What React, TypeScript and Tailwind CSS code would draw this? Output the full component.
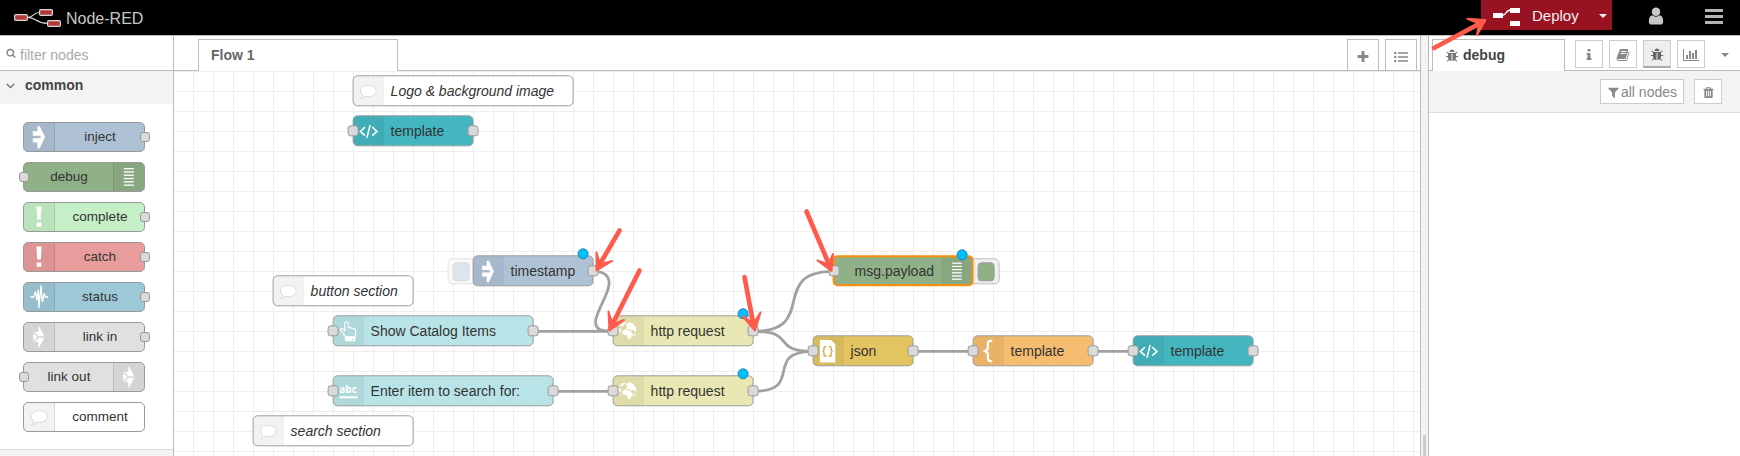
import React from "react";

type IconName =
  | "inject" | "debug" | "bang" | "status" | "link" | "comment"
  | "code" | "hand" | "abc" | "globe" | "json" | "brace";

const FA = {
  bug: "M1696 960q0 26-19 45t-45 19h-224q0 171-67 290l208 209q19 19 19 45t-19 45q-18 19-45 19t-45-19l-198-197q-5 5-15 13t-42 28.5-65 36.5-82 29-97 13v-896h-128v896q-51 0-101.5-13.5t-87-33-66-39-43.5-32.5l-15-14-183 207q-20 21-48 21-24 0-43-16-19-18-20.5-44.5t15.5-46.5l202-227q-58-114-58-274h-224q-26 0-45-19t-19-45 19-45 45-19h224v-294l-173-173q-19-19-19-45t19-45 45-19 45 19l173 173h844l173-173q19-19 45-19t45 19 19 45-19 45l-173 173v294h224q26 0 45 19t19 45zm-480-576h-640q0-133 93.5-226.5t226.5-93.5 226.5 93.5 93.5 226.5z",
  chart: "M640 896v512h-256v-512h256zm384-512v1024h-256v-1024h256zm1024 1152v128h-2048v-1536h128v1408h1920zm-640-896v768h-256v-768h256zm384-384v1152h-256v-1152h256z",
  user: "M1536 1399q0 109-62.5 187t-150.5 78h-854q-88 0-150.5-78t-62.5-187q0-85 8.5-160.5t31.5-152 58.5-131 94-89 134.5-34.5q131 128 313 128t313-128q76 0 134.5 34.5t94 89 58.5 131 31.5 152 8.5 160.5zm-256-887q0 159-112.5 271.5t-271.5 112.5-271.5-112.5-112.5-271.5 112.5-271.5 271.5-112.5 271.5 112.5 112.5 271.5z",
  trash: "M704 1376v-704q0-14-9-23t-23-9h-64q-14 0-23 9t-9 23v704q0 14 9 23t23 9h64q14 0 23-9t9-23zm256 0v-704q0-14-9-23t-23-9h-64q-14 0-23 9t-9 23v704q0 14 9 23t23 9h64q14 0 23-9t9-23zm256 0v-704q0-14-9-23t-23-9h-64q-14 0-23 9t-9 23v704q0 14 9 23t23 9h64q14 0 23-9t9-23zm-544-992h448l-48-117q-7-9-17-11h-317q-10 2-17 11zm928 32v64q0 14-9 23t-23 9h-96v948q0 83-47 143.5t-113 60.5h-832q-66 0-113-58.5t-47-141.5v-952h-96q-14 0-23-9t-9-23v-64q0-14 9-23t23-9h309l70-167q15-37 54-63t79-26h320q40 0 79 26t54 63l70 167h309q14 0 23 9t9 23z",
  plus: "M1600 736v192q0 40-28 68t-68 28h-416v416q0 40-28 68t-68 28h-192q-40 0-68-28t-28-68v-416h-416q-40 0-68-28t-28-68v-192q0-40 28-68t68-28h416v-416q0-40 28-68t68-28h192q40 0 68 28t28 68v416h416q40 0 68 28t28 68z",
  search: "M1216 832q0-185-131.5-316.5t-316.5-131.5-316.5 131.5-131.5 316.5 131.5 316.5 316.5 131.5 316.5-131.5 131.5-316.5zm512 832q0 52-38 90t-90 38q-54 0-90-38l-343-342q-179 124-399 124-143 0-273.5-55.5t-225-150-150-225-55.5-273.5 55.5-273.5 150-225 225-150 273.5-55.5 273.5 55.5 225 150 150 225 55.5 273.5q0 220-124 399l343 343q37 37 37 90z",
  filter: "M1595 295q17 41-14 70l-493 493v742q0 42-39 59-13 5-25 5-27 0-45-19l-256-256q-19-19-19-45v-486l-493-493q-31-29-14-70 17-39 59-39h1280q42 0 59 39z",
  info: "M1216 1344v128q0 26-19 45t-45 19h-512q-26 0-45-19t-19-45v-128q0-26 19-45t45-19h64v-384h-64q-26 0-45-19t-19-45v-128q0-26 19-45t45-19h384q26 0 45 19t19 45v576h64q26 0 45 19t19 45zm-128-1152v192q0 26-19 45t-45 19h-256q-26 0-45-19t-19-45v-192q0-26 19-45t45-19h256q26 0 45 19t19 45z",
  book: "M1703 478q40 57 18 129l-275 906q-19 64-76.5 107.5t-122.5 43.5h-923q-77 0-148.5-53.5t-99.5-131.5q-24-67-2-127 0-4 3-27t4-37q1-8-3-21.5t-3-19.5q2-11 8-21t16.5-23.5 16.5-23.5q23-38 45-91.5t30-91.5q3-10 .5-30t-.5-28q3-11 17-28t17-23q21-36 42-92t25-90q1-9-2.5-32t.5-28q4-13 22-30.5t22-22.5q19-26 42.5-84.5t27.5-96.5q1-8-3-25.5t-2-26.5q2-8 9-18t18-23 17-21q8-12 16.5-30.5t15-35 16-36 19.5-32 26.5-23.5 36-11.5 47.5 5.5l-1 3q38-9 51-9h761q74 0 114 56t18 130l-274 906q-36 119-71.5 153.5t-128.5 34.5h-869q-27 0-38 15-11 16-1 43 24 70 144 70h923q29 0 56-15.5t35-41.5l300-987q7-22 5-57 38 15 59 43zm-1064 2q-4 13 2 22.5t20 9.5h608q13 0 25.5-9.5t16.5-22.5l21-64q4-13-2-22.5t-20-9.5h-608q-13 0-25.5 9.5t-16.5 22.5zm-83 256q-4 13 2 22.5t20 9.5h608q13 0 25.5-9.5t16.5-22.5l21-64q4-13-2-22.5t-20-9.5h-608q-13 0-25.5 9.5t-16.5 22.5z",
};

function Fa({ d, className, wide }: { d: string; className: string; wide?: boolean }) {
  return (
    <svg viewBox={wide ? "0 0 2048 1792" : "0 0 1792 1792"} className={className} fill="currentColor">
      <path d={d} />
    </svg>
  );
}

function NodeIcon({ name }: { name: IconName }) {
  const svg = "block h-[30px] w-[30px]";
  switch (name) {
    case "inject":
      return (
        <svg viewBox="0 0 30 30" className={svg} fill="#fff">
          <path d="M8.800 9.200h4.700V4.200h2.300L21 15 15.800 26.200h-2.300v-5.800H8.800v-4.100h7.800v-2.600H8.800z" />
        </svg>
      );
    case "debug":
      return (
        <svg viewBox="0 0 30 30" className={svg} fill="#fff">
          {[6, 9.3, 12.6, 15.9, 19.2, 22.5].map((y) => (
            <rect key={y} x="9.800" y={y} width="10" height="1.300" />
          ))}
        </svg>
      );
    case "bang":
      return (
        <svg viewBox="0 0 30 30" className={svg} fill="#fff">
          <path d="M12.4 4.5h5.2l-.8 13h-3.6zM12.7 20.4h4.6v4.3h-4.6z" />
        </svg>
      );
    case "status":
      return (
        <svg viewBox="0 0 30 30" className={svg} fill="none" stroke="#fff" strokeWidth="1.300" strokeLinejoin="bevel">
          <path d="M6.300 15h3.500l1.700-5.500 1.500 9 1.300-11L14.900 26 17 3.500l1.300 16.500 1.900-8.500 1.200 3.500h2.900" />
        </svg>
      );
    case "link":
      return (
        <svg viewBox="0 0 30 30" className={svg}>
          <path d="M14.600 3.300 20.600 14.900 14.600 26.600l-.4-6.800-5-.2V10.500l5-.4z" fill="#fff" />
          <path d="M8.600 11.700c6.600-.6 6.600 7.300 0 6.700M13.400 15h8" fill="none" stroke="#d4d4d4" strokeWidth="1.300" />
        </svg>
      );
    case "comment":
      return (
        <svg viewBox="0 0 30 30" className={svg} fill="#fff" stroke="#d9d9d9" strokeWidth="1">
          <path d="M15.300 8.800c4.700 0 8 2.500 8 5.800s-3.300 5.900-8 5.900c-1.100 0-2.200-.1-3.200-.5-1.100 1.500-2.600 2.500-4.600 2.700 1.200-.9 1.900-2.200 2-3.800-1.500-1-2.300-2.600-2.300-4.300 0-3.300 3.400-5.800 8.100-5.800z" />
        </svg>
      );
    case "code":
      return (
        <svg viewBox="0 0 30 30" className={svg} fill="none" stroke="#fff" strokeWidth="1.600">
          <path d="M11.800 10.700 7 15.100l4.800 4.300M19.300 10.700l4.800 4.400-4.800 4.300M17.100 8.500l-3.300 13.200" />
        </svg>
      );
    case "hand":
      return (
        <svg viewBox="0 0 30 30" className={svg} fill="none" stroke="#fff" strokeWidth="1.200" strokeLinejoin="round">
          <path d="M11.600 14.600V7.300c0-2.500 3.700-2.500 3.700 0v4.100c1.200-.6 2.300-.3 2.700.5 1.100-.5 2.200-.2 2.600.6 1.500-.3 2.300.4 2.300 2v2.600c0 1.500-1 2.600-1 4.200h-9.600c0-2-2.400-3.200-3.100-4.800-.5-1.400-2.300-2-2.200-3.300.2-1.700 2.700-1.700 4.600 1.400z" />
          <path d="M12.300 20.800h9.600v4h-9.600z" fill="#fff" stroke="#fff" />
          <circle cx="19.600" cy="23.400" r=".8" fill="#b0dadd" stroke="none" />
        </svg>
      );
    case "abc":
      return (
        <span className="flex h-[30px] w-[30px] flex-col items-center pt-[8px] font-['Open_Sans',sans-serif] text-[10px] leading-[10px] font-bold text-white">
          <span>abc</span>
          <span className="mt-[2px] h-[2px] w-[18px] bg-white" />
        </span>
      );
    case "globe":
      return (
        <svg viewBox="0 0 30 30" className={svg} fill="#fff">
          <path d="M6 9.200 8.800 6.800 12.200 6l.3 1.100-2 .5.200 1.200-2.400.9z" />
          <path d="M5.200 11.200l1.400.4 1.300 2.200-1.400 3-1.100-2.200z" />
          <path d="M13 8.600l1.200-2.200 3.200-.5 3 1.500 2.300 3.300.8 3.800-1.300 1-1.300-1.700-1.600-.5-1 1.200-1.600-1.800-2.800.3-1-1.200 1.400-1.500z" />
          <path d="M9.200 14.600l3-1.500 4.100 1 1.900 1.300 1.200 2.400 1.300.2-2.400 3-1.700 2.500-1.900-.8-.7-3.700-3.900-.6-1.300-1.800z" />
          <path d="M21.200 18.500l1.500-1.200-.4 2.300-1.100 1z" />
        </svg>
      );
    case "json":
      return (
        <svg viewBox="0 0 30 30" className={svg}>
          <path d="M6.500 3.200H18l4.500 4.500v18.900h-16z" fill="#fff" />
          <path
            d="M13.300 10h-.8c-1.500 0-1.700.8-1.700 1.800v1.400c0 1.100-.6 1.700-1.600 1.800 1 .1 1.600.7 1.600 1.800v1.400c0 1.100.2 1.800 1.700 1.800h.8M15.700 10h.8c1.500 0 1.700.8 1.700 1.800v1.400c0 1.100.6 1.700 1.600 1.800-1 .1-1.600.7-1.600 1.800v1.400c0 1.100-.2 1.800-1.700 1.800h-.8"
            fill="none" stroke="#d6b85a" strokeWidth="1.700"
          />
        </svg>
      );
    case "brace":
      return (
        <svg viewBox="0 0 30 30" className={svg} fill="none" stroke="#fff" strokeWidth="2.300">
          <path d="M19.300 4.200h-1.500c-2.200 0-3 .9-3 3V11c0 2.300-1.100 3.500-4.500 3.700 3.400.2 4.500 1.400 4.500 3.700v3.900c0 2.100.8 3 3 3h1.500" />
        </svg>
      );
  }
}

function PalettePort({ side }: { side: "left" | "right" }) {
  return (
    <span
      className={
        "absolute top-1/2 z-10 -mt-[5px] h-[10px] w-[10px] rounded-[3px] border border-[#999] bg-[#dadada] " +
        (side === "left" ? "-left-[5px]" : "-right-[6px]")
      }
    />
  );
}

function CanvasPort({ side }: { side: "left" | "right" }) {
  return (
    <span
      className={
        "absolute top-1/2 z-10 -mt-[5.500px] h-[11px] w-[11px] rounded-[3px] border border-[#999] bg-[#dadada] " +
        (side === "left" ? "-left-[6px]" : "-right-[6px]")
      }
    />
  );
}

interface PaletteItem {
  label: string;
  icon: IconName;
  bg: string;
  port?: "left" | "right";
  iconRight?: boolean;
}

const palette: PaletteItem[] = [
  { label: "inject", icon: "inject", bg: "bg-[#afc2d5]", port: "right" },
  { label: "debug", icon: "debug", bg: "bg-[#90b088]", port: "left", iconRight: true },
  { label: "complete", icon: "bang", bg: "bg-[#c5efc6]", port: "right" },
  { label: "catch", icon: "bang", bg: "bg-[#e89c9c]", port: "right" },
  { label: "status", icon: "status", bg: "bg-[#9dc8d7]", port: "right" },
  { label: "link in", icon: "link", bg: "bg-[#e0e0e0]", port: "right" },
  { label: "link out", icon: "link", bg: "bg-[#e0e0e0]", port: "left", iconRight: true },
  { label: "comment", icon: "comment", bg: "bg-white" },
];

function PaletteNode({ item }: { item: PaletteItem }) {
  return (
    <div
      className={
        "relative flex h-[30px] w-[122px] items-stretch rounded-[5px] border border-[#999] " +
        item.bg + (item.iconRight ? " flex-row-reverse" : "")
      }
    >
      <div
        className={
          "flex w-[31px] items-center justify-center bg-black/5 " +
          (item.iconRight ? "rounded-r-[4px] border-l border-black/10" : "rounded-l-[4px] border-r border-black/10")
        }
      >
        <NodeIcon name={item.icon} />
      </div>
      <div className="flex flex-1 items-center justify-center pt-px pl-px text-[13.500px] text-[#333]">{item.label}</div>
      {item.port && <PalettePort side={item.port} />}
    </div>
  );
}

interface FlowNode {
  id: string;
  label: string;
  icon: IconName;
  place: string;
  bg: string;
  input?: boolean;
  output?: boolean;
  changed?: boolean;
  comment?: boolean;
  selected?: boolean;
  iconRight?: boolean;
}

const nodes: FlowNode[] = [
  { id: "c1", label: "Logo & background image", icon: "comment", place: "left-[179px] top-[4px] w-[221px]", bg: "bg-white", comment: true },
  { id: "t1", label: "template", icon: "code", place: "left-[179px] top-[44px] w-[121px]", bg: "bg-[#44b6bf]", input: true, output: true },
  { id: "ts", label: "timestamp", icon: "inject", place: "left-[299px] top-[184px] w-[121px]", bg: "bg-[#afc2d5]", output: true, changed: true },
  { id: "c2", label: "button section", icon: "comment", place: "left-[99px] top-[204px] w-[141px]", bg: "bg-white", comment: true },
  { id: "b1", label: "Show Catalog Items", icon: "hand", place: "left-[159px] top-[244px] w-[201px]", bg: "bg-[#b9e4e7]", input: true, output: true },
  { id: "b2", label: "Enter item to search for:", icon: "abc", place: "left-[159px] top-[304px] w-[221px]", bg: "bg-[#b9e4e7]", input: true, output: true },
  { id: "c3", label: "search section", icon: "comment", place: "left-[79px] top-[344px] w-[161px]", bg: "bg-white", comment: true },
  { id: "h1", label: "http request", icon: "globe", place: "left-[439px] top-[244px] w-[141px]", bg: "bg-[#e9e8b4]", input: true, output: true, changed: true },
  { id: "h2", label: "http request", icon: "globe", place: "left-[439px] top-[304px] w-[141px]", bg: "bg-[#e9e8b4]", input: true, output: true, changed: true },
  { id: "d1", label: "msg.payload", icon: "debug", place: "left-[659px] top-[184px] w-[141px]", bg: "bg-[#90b088]", input: true, changed: true, selected: true, iconRight: true },
  { id: "j1", label: "json", icon: "json", place: "left-[639px] top-[264px] w-[101px]", bg: "bg-[#e2c461]", input: true, output: true },
  { id: "t2", label: "template", icon: "brace", place: "left-[799px] top-[264px] w-[121px]", bg: "bg-[#f6bc6f]", input: true, output: true },
  { id: "t3", label: "template", icon: "code", place: "left-[959px] top-[264px] w-[121px]", bg: "bg-[#44b6bf]", input: true, output: true },
];

function CanvasNode({ node }: { node: FlowNode }) {
  return (
    <div
      className={
        "absolute flex h-[31px] items-stretch rounded-[5px] " +
        (node.selected ? "border-2 border-[#ff8c08] " : "border border-[#9c9c9c] ") +
        node.place + " " + node.bg + (node.iconRight ? " flex-row-reverse" : "")
      }
    >
      <div
        className={
          "flex w-[30px] shrink-0 items-center justify-center bg-black/5 " +
          (node.iconRight ? "rounded-r-[3px] border-l border-black/10" : "rounded-l-[4px] border-r border-black/10")
        }
      >
        <NodeIcon name={node.icon} />
      </div>
      <div
        className={
          "flex flex-1 items-center pt-px text-[14px] whitespace-nowrap text-[#333] " +
          (node.iconRight ? "pl-[20px]" : "pl-[7px]") + (node.comment ? " italic" : "")
        }
      >
        {node.label}
      </div>
      {node.input && <CanvasPort side="left" />}
      {node.output && <CanvasPort side="right" />}
      {node.changed && (
        <span className="absolute -top-[8px] right-[4px] h-[11px] w-[11px] rounded-full border border-[#1587b8] bg-[#00bfff]" />
      )}
    </div>
  );
}

const wires = [
  "M420 200C434 200 439 208 433 222C427 237 422 243 422 251C422 259 429 260 440 260",
  "M360 260H440",
  "M380 320H440",
  "M580 260C646 260 594 200 660 200",
  "M580 260C625 260 595 280 640 280",
  "M580 320C632 320 588 280 640 280",
  "M740 280H800",
  "M920 280H960",
];

function Canvas() {
  return (
    <div className="relative flex-1 overflow-hidden bg-white bg-[linear-gradient(to_right,#eee_1px,transparent_1px),linear-gradient(to_bottom,#eee_1px,transparent_1px)] bg-[length:20px_20px] bg-[position:19px_0px]">
      <div className="absolute inset-0 translate-x-[-0.4px] translate-y-[0.3px]">
        <svg className="absolute top-0 left-0 h-[386px] w-[1246px]" viewBox="0 0 1246 386" fill="none" stroke="#a1a1a1" strokeWidth="2.800">
          {wires.map((d) => (
            <path key={d} d={d} />
          ))}
        </svg>
        <div className="absolute top-[187px] left-[274px] flex h-[26px] w-[32px] items-center rounded-[5px] border border-[#e2e2e2] bg-[#fafafa] pl-[4px]">
          <span className="h-[19px] w-[17px] rounded-[4px] border border-[#d3dbe3] bg-[#dde5ed]" />
        </div>
        <div className="absolute top-[187px] left-[793px] flex h-[26px] w-[33px] items-center justify-end rounded-[5px] border border-[#bbb] bg-[#f0f0f0] pr-[4px]">
          <span className="h-[19px] w-[17px] rounded-[4px] border border-[#999] bg-[#90b088]" />
        </div>
        {nodes.map((n) => (
          <CanvasNode key={n.id} node={n} />
        ))}
      </div>
    </div>
  );
}

const arrows = [
  { shaft: "M619.500 230.500L600 264", a: "596.500,252.500", b: "612,261", tip: "596.500,270.500", notch: "600,264.500" },
  { shaft: "M639.500 270.500L613 323", a: "608.500,311.500", b: "624,320", tip: "609.500,330.500", notch: "612.500,324.500" },
  { shaft: "M744.500 277L753 322", a: "742.500,316", b: "760.500,312.500", tip: "755,330.500", notch: "753.500,323.500" },
  { shaft: "M806.500 211.500L828 262", a: "817.500,260.500", b: "833,254", tip: "831.500,271", notch: "828.500,264.500" },
  { shaft: "M1434 48L1477 25", a: "1467.500,18.800", b: "1477,35", tip: "1485.500,20", notch: "1479,23.500" },
];

function Arrows() {
  return (
    <svg className="pointer-events-none absolute top-0 left-0 z-20 h-[456px] w-[1740px]" viewBox="0 0 1740 456" stroke="#ff5a4c" strokeLinecap="round" strokeLinejoin="round">
      {arrows.map((a) => (
        <g key={a.shaft}>
          <path d={a.shaft} strokeWidth="4.600" />
          <polygon points={`${a.a} ${a.tip} ${a.b} ${a.notch}`} fill="#ff5a4c" strokeWidth="2" />
        </g>
      ))}
    </svg>
  );
}

function Header() {
  return (
    <header className="flex h-[35px] shrink-0 items-start bg-black">
      <div className="flex h-[35px] flex-1 items-center">
        <svg viewBox="0 0 66 35" className="h-[35px] w-[66px]" fill="none" stroke="#d8d8d8" strokeWidth="1.200">
          <path d="M28 17.300C34 17.300 33 12.500 39 12.500M28 17.300C36 17.300 36 23.300 47 23.300" />
          <rect x="14.600" y="14.600" width="12.800" height="5.800" rx="1.200" fill="#b13a3b" />
          <rect x="39.600" y="9.600" width="12.800" height="5.800" rx="1.200" fill="#b13a3b" />
          <rect x="47.600" y="20.600" width="12.800" height="5.800" rx="1.200" fill="#b13a3b" />
        </svg>
        <span className="mt-[2px] text-[16px] text-[#c7c7c7]">Node-RED</span>
      </div>
      <div className="flex h-[30px] w-[131px] items-start bg-[#981221]">
        <svg viewBox="0 0 28 30" className="ml-[12px] h-[30px] w-[28px]">
          <path d="M9 15.500C14 15.500 12 10 18 10" fill="none" stroke="#fff" strokeWidth="1.300" />
          <path d="M0 13h10v5H0zM17 8h10v5H17zM17 21h10v5H17z" fill="#fff" />
        </svg>
        <span className="ml-[11px] pt-[5px] text-[15px] text-[#eee]">Deploy</span>
        <span className="mt-[14px] ml-[20px] border-x-[4px] border-t-[4px] border-x-transparent border-t-[#eee]" />
      </div>
      <div className="flex h-[32px] w-[128px] items-center">
        <Fa d={FA.user} className="ml-[34px] h-[20px] w-[20px] text-[#c7c7c7]" />
        <div className="ml-[39px] flex w-[18px] flex-col gap-[3px]">
          <span className="h-[3px] bg-[#b4b4b4]" />
          <span className="h-[3px] bg-[#b4b4b4]" />
          <span className="h-[3px] bg-[#b4b4b4]" />
        </div>
      </div>
    </header>
  );
}

function Palette() {
  return (
    <aside className="flex w-[174px] shrink-0 flex-col border-r border-[#bbb]">
      <div className="flex h-[35px] items-center border-b border-[#bbb] pt-[4px] pl-[6px] text-[#999]">
        <Fa d={FA.search} className="-mt-[4px] h-[10px] w-[10px] text-[#888]" />
        <span className="ml-[4px] text-[14px] text-[#a9a9a9]">filter nodes</span>
      </div>
      <div className="flex h-[33px] items-center bg-[#f3f3f3] pb-[4px] pl-[6px]">
        <svg viewBox="0 0 10 6" className="h-[6px] w-[9px]" fill="none" stroke="#666" strokeWidth="1.300">
          <path d="M1 .8 5 4.800 9 .8" />
        </svg>
        <span className="ml-[10px] text-[14px] font-bold text-[#444]">common</span>
      </div>
      <div className="flex h-[346px] flex-col gap-[10px] border-b border-[#ddd] pt-[18px] pl-[23px]">
        {palette.map((p) => (
          <PaletteNode key={p.label} item={p} />
        ))}
      </div>
      <div className="flex-1 bg-[#f3f3f3]" />
    </aside>
  );
}

function Workspace() {
  return (
    <main className="flex w-[1246px] shrink-0 flex-col">
      <div className="flex h-[35px] shrink-0 items-end">
        <div className="h-px w-[24px] bg-[#bbb]" />
        <div className="flex h-[32px] w-[200px] items-center border-x border-t border-[#bbb] pl-[12px] text-[14px] font-bold text-[#666]">
          Flow 1
        </div>
        <div className="flex h-[32px] flex-1 items-stretch justify-end gap-[6px] border-b border-[#bbb] pr-[3px]">
          <div className="flex w-[32px] items-center justify-center border-x border-t border-[#bbb] pt-[3px]">
            <Fa d={FA.plus} className="h-[14px] w-[14px] text-[#888]" />
          </div>
          <div className="flex w-[32px] items-center justify-center border-x border-t border-[#bbb] pt-[4px]">
            <svg viewBox="0 0 14 12" className="h-[12px] w-[14px]" fill="#888">
              <circle cx="1.300" cy="2" r="1.200" />
              <circle cx="1.300" cy="6" r="1.200" />
              <circle cx="1.300" cy="10" r="1.200" />
              <path d="M4 1.200h10v1.500H4zM4 5.200h10v1.500H4zM4 9.200h10v1.500H4z" />
            </svg>
          </div>
        </div>
      </div>
      <Canvas />
    </main>
  );
}

function Sidebar() {
  const btn = "flex h-[28px] w-[28px] items-center justify-center border border-[#ccc] bg-white pt-px text-[#888]";
  return (
    <aside className="flex flex-1 flex-col">
      <div className="flex h-[35px] shrink-0 items-end">
        <div className="h-px w-[3px] bg-[#bbb]" />
        <div className="flex h-[32px] w-[133px] items-center border-x border-t border-[#bbb] pl-[12px]">
          <Fa d={FA.bug} className="h-[14px] w-[14px] text-[#777]" />
          <span className="ml-[4px] text-[14px] font-bold text-[#444]">debug</span>
        </div>
        <div className="flex h-[32px] flex-1 items-start gap-[6px] border-b border-[#bbb] pt-[1px] pl-[10px]">
          <div className={btn}><Fa d={FA.info} className="h-[14px] w-[14px]" /></div>
          <div className={btn}><Fa d={FA.book} className="h-[14px] w-[14px]" /></div>
          <div className="flex h-[28px] w-[28px] items-center justify-center border border-b-2 border-[#ccc] border-b-[#aaa] bg-[#eee] pt-[2px] text-[#666]">
            <Fa d={FA.bug} className="h-[14px] w-[14px]" />
          </div>
          <div className={btn}><Fa d={FA.chart} wide className="h-[14px] w-[16px]" /></div>
          <span className="mt-[13px] ml-[10px] border-x-[4px] border-t-[4px] border-x-transparent border-t-[#888]" />
        </div>
      </div>
      <div className="flex h-[42px] shrink-0 items-center justify-end gap-[10px] border-b border-[#ddd] bg-[#f3f3f3] pr-[18px]">
        <div className="flex h-[25px] w-[84px] items-center justify-center border border-[#ccc] bg-white pt-px text-[#888]">
          <Fa d={FA.filter} className="h-[13px] w-[13px]" />
          <span className="ml-[1px] text-[14px]">all nodes</span>
        </div>
        <div className="flex h-[25px] w-[28px] items-center justify-center border border-[#ccc] bg-white pt-px text-[#888]">
          <Fa d={FA.trash} className="h-[13px] w-[13px]" />
        </div>
      </div>
      <div className="flex-1 bg-white" />
    </aside>
  );
}

export default function App() {
  return (
    <div className="relative flex h-[456px] w-[1740px] flex-col overflow-hidden bg-white font-['Liberation_Sans',Arial,sans-serif] leading-normal">
      <Header />
      <div className="flex min-h-0 flex-1 border-t border-[#bbb]">
        <Palette />
        <Workspace />
        <div className="flex w-[9px] shrink-0 items-end justify-center border-x border-[#bbb] bg-[#f3f3f3]">
          <span className="h-[21px] w-[3px] bg-[#ccc]" />
        </div>
        <Sidebar />
      </div>
      <Arrows />
    </div>
  );
}
